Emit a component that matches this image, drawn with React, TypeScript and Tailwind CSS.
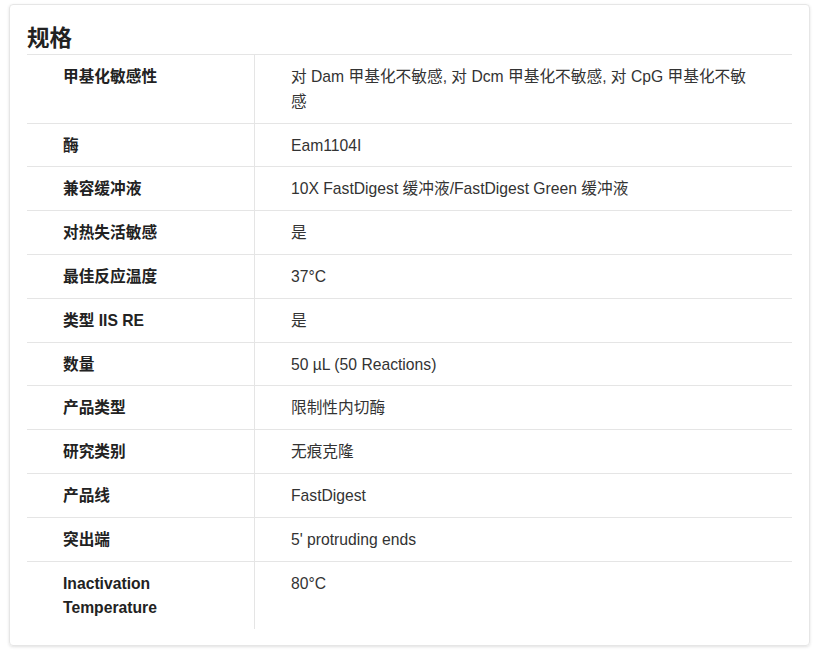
const rows: [string, string][] = [
  ["甲基化敏感性", "对 Dam 甲基化不敏感, 对 Dcm 甲基化不敏感, 对 CpG 甲基化不敏感"],
  ["酶", "Eam1104I"],
  ["兼容缓冲液", "10X FastDigest 缓冲液/FastDigest Green 缓冲液"],
  ["对热失活敏感", "是"],
  ["最佳反应温度", "37°C"],
  ["类型 IIS RE", "是"],
  ["数量", "50 µL (50 Reactions)"],
  ["产品类型", "限制性内切酶"],
  ["研究类别", "无痕克隆"],
  ["产品线", "FastDigest"],
  ["突出端", "5' protruding ends"],
  ["Inactivation Temperature", "80°C"],
];

export default function App() {
  return (
    <div
      className="w-[818px] h-[651px] bg-white pt-[4px] pl-[9px]"
      style={{ fontFamily: '"Liberation Sans", Arial, "Noto Sans CJK SC", sans-serif' }}
    >
      <div className="w-[801px] h-[642px] rounded-[4px] border border-[#e6e6e6] shadow-[0_1px_3px_rgba(0,0,0,0.12)] pl-[17px] pr-[17px] pt-[19px]">
        <h2 className="text-[22.5px] leading-[30px] font-bold text-[#222] h-[30px]">规格</h2>
        <div className="text-[15.7px] leading-[24.8px] text-[#333]">
          {rows.map(([k, v], i) => (
            <div key={i} className="flex border-t border-[#e5e5e5]">
              <div className="w-[227px] shrink-0 pl-[36px] pr-[20px] pt-[10px] pb-[8px] font-bold text-[#222]">
                {k}
              </div>
              <div className="flex-1 border-l border-[#e5e5e5] pl-[36px] pr-[38px] pt-[10px] pb-[8px]">
                {v}
              </div>
            </div>
          ))}
        </div>
      </div>
    </div>
  );
}
